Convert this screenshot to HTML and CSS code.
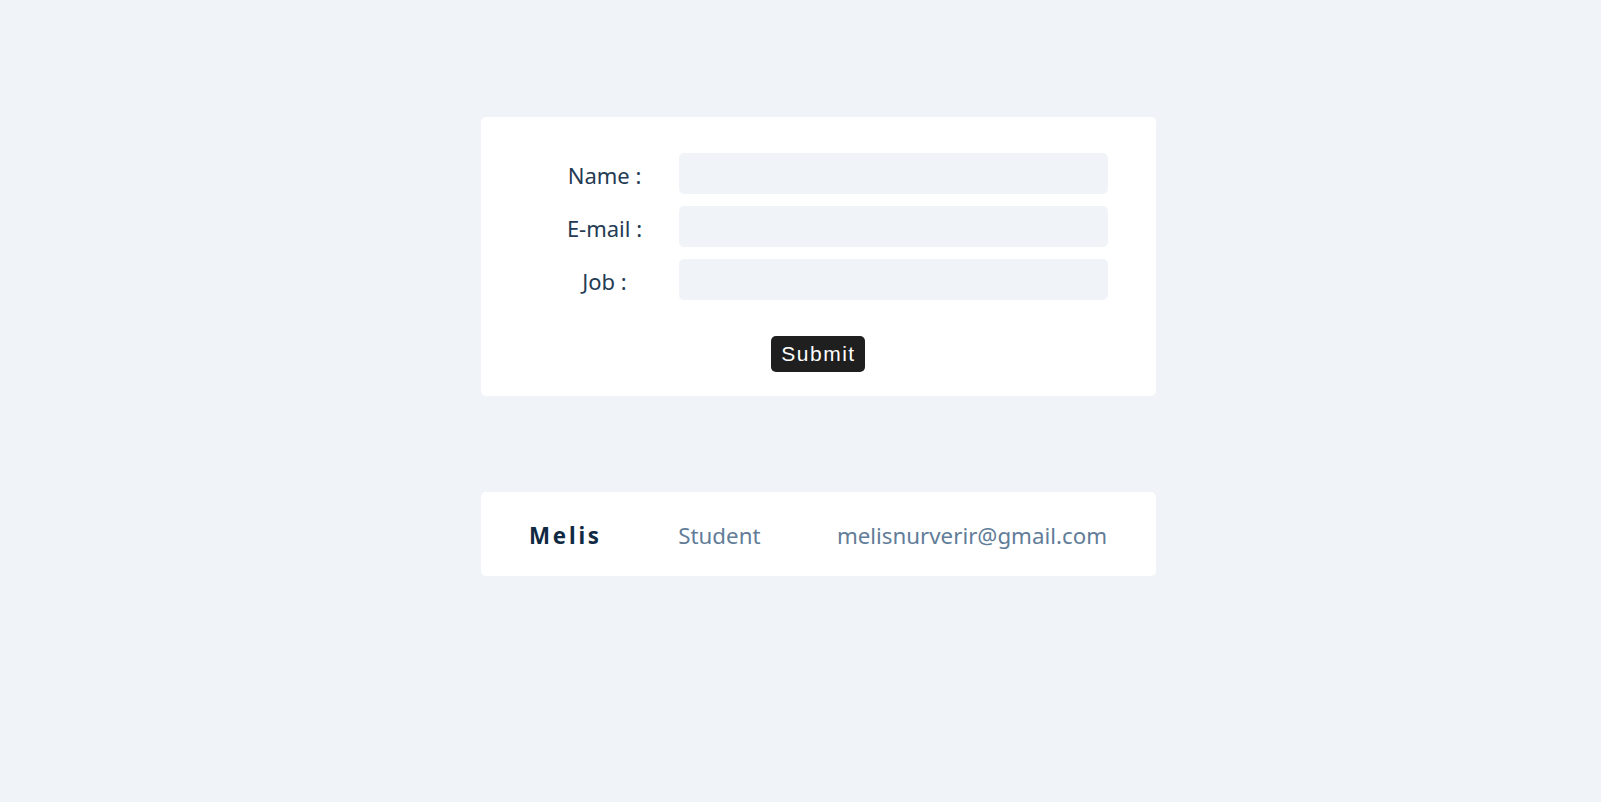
FILE: index.html
```html
<!DOCTYPE html>
<html lang="en">
<head>
<meta charset="utf-8">
<title>Form</title>
<link rel="stylesheet" href="styles.css">
</head>
<body>
<main class="page">
  <form class="card form-card">
    <div class="form-row">
      <label class="form-label" for="name">Name :</label>
      <input class="form-input" id="name" type="text">
    </div>
    <div class="form-row">
      <label class="form-label" for="email">E-mail :</label>
      <input class="form-input" id="email" type="text">
    </div>
    <div class="form-row">
      <label class="form-label" for="job">Job :</label>
      <input class="form-input" id="job" type="text">
    </div>
    <div class="form-actions">
      <button class="submit-btn" type="button">Submit</button>
    </div>
  </form>
  <section class="card person-card">
    <span class="person-name">Melis</span>
    <span class="person-job">Student</span>
    <span class="person-email">melisnurverir@gmail.com</span>
  </section>
</main>
</body>
</html>
```
FILE: styles.css
```css
html, body {
  margin: 0;
  padding: 0;
  background: #f0f4f8;
}
body {
  font-family: "Noto Sans", "Open Sans", sans-serif;
  color: #243b53;
}
.page {
  display: flex;
  flex-direction: column;
  align-items: center;
  padding-left: 36px;
  padding-top: 117px;
  gap: 96px;
}
.card {
  box-sizing: border-box;
  width: 675px;
  background: #ffffff;
  border-radius: 5px;
}
.form-card {
  display: flex;
  flex-direction: column;
  gap: 12px;
  padding: 36px 48px 24px 49px;
  margin: 0;
}
.form-row {
  display: flex;
  align-items: center;
}
.form-label {
  width: 149px;
  flex: none;
  text-align: center;
  font-size: 22px;
  line-height: 30px;
  padding-top: 2px;
  color: #243b53;
}
.form-input {
  flex: 1;
  height: 41px;
  box-sizing: border-box;
  border: none;
  border-radius: 5px;
  background: #f0f4f8;
  outline: none;
  padding: 0 10px;
}
.form-actions {
  display: flex;
  justify-content: center;
  padding-top: 24px;
  padding-right: 2px;
}
.submit-btn {
  height: 36px;
  padding: 0 9px 0 10px;
  border: none;
  border-radius: 5px;
  background: #1f1f1f;
  color: #ffffff;
  font-family: "Liberation Sans", Arial, sans-serif;
  font-size: 21px;
  letter-spacing: 1.5px;
  line-height: 36px;
}
.person-card {
  display: flex;
  align-items: center;
  justify-content: space-between;
  height: 84px;
  padding: 2px 49px 0 48px;
  font-size: 22.3px;
}
.person-name {
  font-weight: 700;
  letter-spacing: 2.8px;
  color: #102a43;
}
.person-job,
.person-email {
  color: #627d98;
}
```
